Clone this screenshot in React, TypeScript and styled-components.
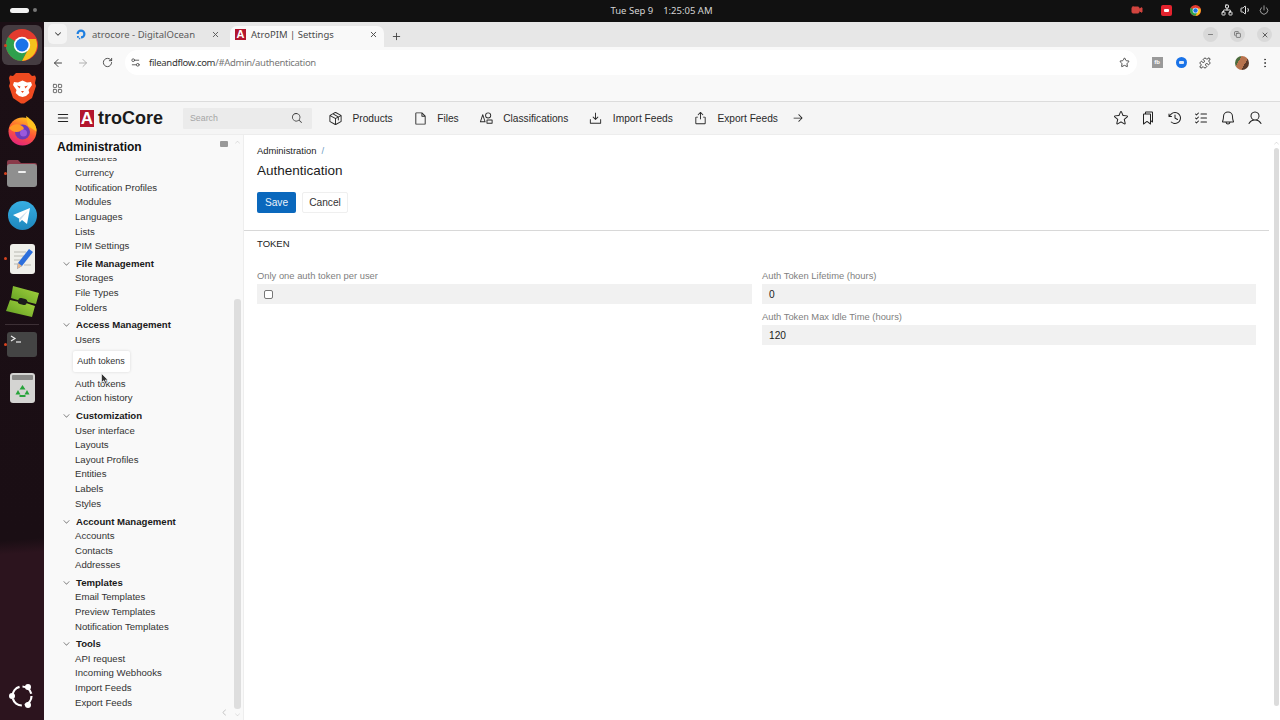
import React from "react";
import styled, { createGlobalStyle } from "styled-components";
import { ArrowLeft, ArrowRight, RotateCw, Star, Puzzle, X, Plus, Minus, ChevronDown, LayoutGrid, EllipsisVertical, Settings2, Copy, Volume1, Power, Network, Video } from "lucide-react";
import { PiPackage, PiFile, PiShapes, PiDownloadSimple, PiExport, PiArrowRight, PiStar, PiBookmarks, PiClockCounterClockwise, PiListChecks, PiBell, PiUser, PiMagnifyingGlass, PiList, PiCaretDown, PiCaretLeft, PiCaretUp } from "react-icons/pi";

const Global = createGlobalStyle`
  html, body { margin: 0; padding: 0; height: 100%; overflow: hidden; background: #fff; }
  #root { height: 100%; }
  * { box-sizing: border-box; }
`;

const Screen = styled.div`
  width: 1280px; height: 720px; display: flex; flex-direction: column; overflow: hidden;
  font-family: "Liberation Sans", Arial, sans-serif; color: #222;
`;
const TopBar = styled.header`
  height: 22px; flex: none; background: #111; color: #d8d8d8; display: flex; align-items: center;
  padding: 0 8px 2px 10px; position: relative;
`;
const Pill = styled.span`width: 19px; height: 5px; border-radius: 3px; background: #f2f2f2;`;
const Dot = styled.span`width: 4px; height: 4px; border-radius: 50%; background: #777; margin-left: 4px;`;
const Clock = styled.div`
  flex: 1; text-align: center; font: 9.5px "Noto Sans", sans-serif; white-space: pre; padding-left: 172px; color: #d4d4d4;
`;
const Tray = styled.div`display: flex; align-items: center; width: 158px; height: 16px;`;
const TraySlot = styled.span<{ $w: number }>`
  width: ${(p) => p.$w}px; display: flex; align-items: center; justify-content: center; flex: none; color: #e8e8e8;
`;
const RedChip = styled.span`
  width: 11px; height: 11px; border-radius: 2px; background: #e4232e; display: flex; align-items: center; justify-content: center; flex: none;
`;
const RedDot = styled.span`width: 5px; height: 3px; border-radius: 1px; background: #fff;`;

const Body = styled.div`flex: 1; display: flex; min-height: 0;`;
const Dock = styled.nav`
  width: 44px; flex: none; display: flex; flex-direction: column; align-items: center; padding-top: 3.3px;
  background: linear-gradient(176deg, #1b0f15 0, #1a0e14 74%, #2c141e 76%, #2c141e 100%);
`;
const DockSlot = styled.div<{ $active?: boolean }>`
  width: 40px; height: 40px; margin-bottom: 2.67px; flex: none; position: relative; display: flex; align-items: center; justify-content: center;
  border-radius: 6px; background: ${(p) => (p.$active ? "#453c41" : "transparent")};
`;
const RunDot = styled.span`
  position: absolute; left: 1.5px; top: 18.5px; width: 3px; height: 3px; border-radius: 50%; background: #d8431f;
`;
const DockSep = styled.div`width: 34px; height: 1px; background: #3d3036; flex: none;`;
const DockEnd = styled.div`margin-top: auto; margin-bottom: 4px; height: 40px; display: flex; align-items: center;`;

const Browser = styled.div`flex: 1; min-width: 0; display: flex; flex-direction: column;`;
const TabStrip = styled.div`
  height: 25px; flex: none; background: #e7e7e7; display: flex; align-items: flex-end; padding-left: 4px; color: #444;
`;
const TabMenu = styled.span`
  width: 19px; height: 20px; margin-bottom: 3px; border-radius: 5px; background: #f4f4f4; display: flex; align-items: center; justify-content: center; flex: none;
`;
const Tab = styled.div<{ $active?: boolean }>`
  height: 21px; width: ${(p) => (p.$active ? 154 : 157)}px; flex: none; display: flex; align-items: center;
  margin-left: ${(p) => (p.$active ? 0 : 6)}px; padding: ${(p) => (p.$active ? "0 6px 5px 5px" : "0 10px 5px 2px")}; border-radius: 7px 7px 0 0;
  background: ${(p) => (p.$active ? "#f9f9f9" : "transparent")}; color: ${(p) => (p.$active ? "#4a4a4a" : "#5a5a5a")};
  font: 9.5px "Noto Sans", sans-serif;
`;
const TabTitle = styled.span`flex: 1; margin-left: 5px; white-space: nowrap;`;
const TabFav = styled.span`
  width: 11px; height: 11px; background: #b3162e; color: #fff; font: bold 11px/11px "Liberation Sans", sans-serif; text-align: center; flex: none;
`;
const NewTab = styled.span`margin: 0 0 5px 7px; display: flex;`;
const WinControls = styled.div`margin-left: auto; display: flex; gap: 12px; padding: 0 8px 5px 0;`;
const WinBtn = styled.span`
  width: 15px; height: 15px; border-radius: 50%; background: #d9d9d9; display: flex; align-items: center; justify-content: center; color: #444;
`;
const Toolbar = styled.div`
  height: 29px; flex: none; background: #f9f9f9; display: flex; align-items: center; color: #555; padding: 2px 0 0 2px;
`;
const NavBtn = styled.span<{ $dim?: boolean }>`
  width: 24.5px; display: flex; justify-content: center; color: ${(p) => (p.$dim ? "#b0b0b0" : "#444")}; flex: none;
`;
const Omnibox = styled.div`
  width: 1012px; height: 25px; margin-left: 5.5px; background: #fff; border-radius: 13px; display: flex; align-items: center; padding: 0 7px 0 5px; flex: none;
`;
const Url = styled.div`
  flex: 1; margin-left: 8px; font: 9.5px "Noto Sans", sans-serif; color: #333; letter-spacing: -.3px; white-space: nowrap;
`;
const UrlRest = styled.span`color: #777;`;
const ExtSlot = styled.span<{ $ml: number }>`
  width: 20px; margin-left: ${(p) => p.$ml}px; display: flex; justify-content: center; flex: none; align-items: center;
`;
const ExtGrey = styled.span`
  width: 11px; height: 11px; background: #999; color: #fff; font: bold 6px/11px "Liberation Sans", sans-serif; text-align: center;
`;
const ExtBlue = styled.span`
  width: 11px; height: 11px; border-radius: 50%; background: #1a73e8; display: flex; align-items: center; justify-content: center;
`;
const ExtBlueInner = styled.span`width: 5px; height: 3px; border-radius: 1px; background: #dfe9f7;`;
const Avatar = styled.span`
  width: 14px; height: 14px; border-radius: 50%; background: linear-gradient(120deg, #4c6b3c 0 30%, #b8734e 30% 65%, #5d3a2a 65%);
`;
const BookmarkBar = styled.div`
  height: 26px; flex: none; background: #f9f9f9; border-bottom: 1px solid #dcdcdc; display: flex; align-items: center; padding: 0 0 1px 8px; color: #666;
`;

const AppHeader = styled.div`
  height: 33px; flex: none; background: #f5f5f5; border-bottom: 1px solid #ededed; display: flex; align-items: center; color: #222;
  padding-left: 12px; padding-right: 17px;
`;
const Burger = styled.span`display: flex; width: 14px; margin-right: 10px; flex: none;`;
const Logo = styled.div`
  display: flex; align-items: center; width: 83px; margin-right: 20px; flex: none;
  font: bold 18px "Liberation Sans", sans-serif; color: #1b1b1b; white-space: nowrap;
`;
const LogoMark = styled.span`
  width: 14px; height: 17px; background: #b3162e; color: #fff; font: bold 17px/18px "Liberation Sans", sans-serif; text-align: center; margin-right: 4px; flex: none;
`;
const Search = styled.div`
  width: 129px; height: 21px; background: #ebebeb; display: flex; align-items: center; justify-content: space-between; padding: 0 9px 0 7px;
  font-size: 8.8px; color: #a5a5a5; flex: none; margin-right: 16px; border-radius: 1px;
`;
const NavItem = styled.div`
  display: flex; align-items: center; gap: 9.5px; font-size: 10.2px; color: #2a2a2a; margin-right: 20px; white-space: nowrap; flex: none;
`;
const NavMore = styled.span`display: flex; margin-left: -6px;`;
const HeaderIcons = styled.div`margin-left: auto; display: flex; gap: 10.8px; align-items: center;`;

const Workspace = styled.div`flex: 1; min-height: 0; display: flex;`;
const Sidebar = styled.aside`
  width: 200px; flex: none; background: #f9f9f9; border-right: 1px solid #eeeeee; display: flex; flex-direction: column; position: relative; overflow: hidden;
`;
const SideHead = styled.div`
  height: 23px; flex: none; padding: 5px 0 0 13px; font-weight: bold; font-size: 12px; color: #111; line-height: 15px;
`;
const SideList = styled.div`flex: 1; min-height: 0; overflow: hidden; font-size: 9.6px; color: #333;`;
const SideScrolled = styled.div`margin-top: -9.5px;`;
const Item = styled.div`height: 14.67px; line-height: 14.67px; padding-left: 31px; white-space: nowrap;`;
const Group = styled.div`margin-top: 2.8px;`;
const GroupHead = styled.div`
  height: 14.67px; display: flex; align-items: center; padding: 0 0 1px 18px; gap: 5px; font-weight: bold; color: #1a1a1a;
`;
const SideTrack = styled.div`position: absolute; left: 190px; top: 164px; width: 7px; height: 410px; background: #dedede; border-radius: 3px;`;
const SideUp = styled.span`position: absolute; left: 190px; top: 4px; color: #ccc; display: flex;`;
const SideDown = styled.span`position: absolute; left: 190px; bottom: 2px; color: #ccc; display: flex;`;
const SideCollapse = styled.span`position: absolute; left: 176px; bottom: 3px; color: #bbb; display: flex;`;
const PinGlyph = styled.span`position: absolute; left: 176px; top: 6px; width: 8px; height: 6px; border-radius: 1px; background: #999;`;
const Tip = styled.div`
  position: absolute; left: 28.5px; top: 216px; width: 57px; height: 21px; background: #fff; border-radius: 2px; box-shadow: 0 0 3px rgba(0,0,0,.14);
  font-size: 9px; line-height: 21px; text-align: center; color: #333;
`;
const Cursor = styled.svg`position: absolute; left: 57px; top: 238px;`;

const Main = styled.main`flex: 1; min-width: 0; background: #fff; display: flex;`;
const MainCol = styled.div`flex: 1; min-width: 0; display: flex; flex-direction: column;`;
const TitleBlock = styled.div`
  height: 96px; flex: none; border-bottom: 1px solid #d8d8d8; padding: 9px 0 0 13px;
`;
const Crumbs = styled.div`font-size: 9.4px; line-height: 13px; color: #222;`;
const CrumbSep = styled.span`color: #6f9cc4; margin-left: 5px;`;
const PageTitle = styled.h1`margin: 4px 0 0; font-weight: normal; font-size: 13.5px; line-height: 20px; color: #1c1c1c;`;
const Actions = styled.div`display: flex; gap: 6px; margin-top: 11px;`;
const Btn = styled.button<{ $primary?: boolean }>`
  height: 21px; width: ${(p) => (p.$primary ? 39 : 46)}px; padding: 0; border-radius: 2px; font: 10.2px "Liberation Sans", sans-serif;
  background: ${(p) => (p.$primary ? "#0a68bd" : "#fff")}; color: ${(p) => (p.$primary ? "#e8f1fa" : "#333")};
  border: ${(p) => (p.$primary ? "none" : "1px solid #efefef")};
`;
const Panel = styled.section`padding: 5.5px 12px 0 13px;`;
const PanelHead = styled.div`font-size: 9.5px; line-height: 13px; color: #222;`;
const FormGrid = styled.div`display: grid; grid-template-columns: 495px 494px; column-gap: 10px; margin-top: 19.5px;`;
const Col = styled.div`display: flex; flex-direction: column; gap: 6px;`;
const Label = styled.div`font-size: 9.4px; line-height: 14px; height: 15px; color: #808080;`;
const Field = styled.div`
  height: 20px; background: #f1f1f1; display: flex; align-items: center; padding-left: 7px; font-size: 10.2px; color: #222;
`;
const Check = styled.span`width: 9px; height: 9px; border: 1px solid #777; border-radius: 2px; background: #fff;`;
const ScrollCol = styled.div`
  width: 11px; flex: none; display: flex; flex-direction: column; align-items: center; padding: 5px 0 14px 3px; color: #ccc;
`;
const ScrollThumb = styled.div`flex: 1; width: 5px; background: #dcdcdc; border-radius: 3px; margin-top: 1px;`;

const Chrome = ({ size = 32 }: { size?: number }) => (
  <svg width={size} height={size} viewBox="0 0 32 32">
    <circle cx="16" cy="16" r="16" fill="#e33b2e" />
    <path d="M16 16 L2.100 8 A16 16 0 0 0 16 32 L23 19z" fill="#2fa04c" />
    <path d="M16 10 H29.900 A16 16 0 0 1 16 32 L23 19z" fill="#f6c21c" />
    <circle cx="16" cy="16" r="8.200" fill="#fff" />
    <circle cx="16" cy="16" r="6.500" fill="#1a73e8" />
  </svg>
);

const Brave = () => (
  <svg width="27" height="32" viewBox="0 0 27 32">
    <path d="M7 1h13l3 3 3-.5L27 6l-1 5 1 3-4 12-8 5.500h-3L4 26 0 14l1-3-1-5 1-2.500L4 4z" fill="#ee4a20" />
    <path d="M5 10l4 .5 4.500-2 4.500 2 4-.5 1 3-3.500 5 .8 3-3.300 3-3.500 1-3.500-1-3.300-3 .8-3L4 13z" fill="#fff" />
    <path d="M8 13.500l3.500 1-1 2zM19 13.500l-3.500 1 1 2z" fill="#ee4a20" />
    <path d="M12 19h3l-1.500 2z" fill="#ee4a20" />
  </svg>
);

const Firefox = () => (
  <svg width="29" height="30" viewBox="0 0 29 30">
    <defs>
      <linearGradient id="ff" x1="0.700" y1="0" x2="0.300" y2="1">
        <stop offset="0" stopColor="#ffc21f" />
        <stop offset=".5" stopColor="#ff5a35" />
        <stop offset="1" stopColor="#e3227e" />
      </linearGradient>
    </defs>
    <circle cx="14.500" cy="15.500" r="14" fill="url(#ff)" />
    <path d="M18 0c6 4 11 9 10.500 15.500L20 10z" fill="#ffc21f" />
    <circle cx="14.500" cy="16" r="7.500" fill="#6d3bb8" />
    <path d="M1 12c3-4 9-5 13-2 3 2 2 4-1 5-5 2-9 1-12-3z" fill="#ff9a26" />
    <circle cx="15.500" cy="17" r="3.500" fill="#9a59dc" />
  </svg>
);

const Files = () => (
  <svg width="30" height="28" viewBox="0 0 30 28">
    <path d="M0 3a2 2 0 0 1 2-2h9l3 3h14a2 2 0 0 1 2 2v6H0z" fill="#8a3a4a" />
    <rect x="0" y="5" width="30" height="23" rx="3" fill="#8f8f8f" />
    <rect x="11" y="12" width="8" height="2" rx="1" fill="#f0f0f0" />
  </svg>
);

const Telegram = () => (
  <svg width="29" height="29" viewBox="0 0 29 29">
    <defs>
      <linearGradient id="tg" x1="0" y1="0" x2="0" y2="1">
        <stop offset="0" stopColor="#37aee2" />
        <stop offset="1" stopColor="#1e87bd" />
      </linearGradient>
    </defs>
    <circle cx="14.500" cy="14.500" r="14.500" fill="url(#tg)" />
    <path d="M5 14l17-7-3 16-5-4-2.500 2.500-.5-4-6-3.500z" fill="#fff" />
    <path d="M12 19.500l8-10-9 8z" fill="#c8dceb" />
  </svg>
);

const Editor = () => (
  <svg width="25" height="30" viewBox="0 0 25 30">
    <rect width="25" height="30" rx="3" fill="#efefea" />
    <path d="M4 8h12M4 12h10M4 16h8M4 20h6M14 21h7" stroke="#b9b9b2" strokeWidth="1" />
    <path d="M19 5l4 3-11 14-5 3 1-6z" fill="#2c6fdc" />
    <path d="M8 19l4 3-5 3z" fill="#e8b98b" />
  </svg>
);

const GreenCube = () => (
  <svg width="33" height="33" viewBox="0 0 33 33">
    <defs>
      <linearGradient id="gc" x1="0" y1="1" x2="1" y2="0">
        <stop offset="0" stopColor="#5f9c22" />
        <stop offset="1" stopColor="#a7d63f" />
      </linearGradient>
    </defs>
    <path d="M7 1l26 7-3 11-8-2-2-2h-3l-2 1-10-3z" fill="url(#gc)" />
    <path d="M4 15l9 2 2 2h3l2-1 9 3-3 11L0 26z" fill="url(#gc)" />
    <rect x="12" y="13.500" width="9" height="6" rx="2.500" fill="#1c1c1c" transform="rotate(14 16.500 16.500)" />
  </svg>
);

const Terminal = () => (
  <svg width="30" height="25" viewBox="0 0 30 25">
    <rect width="30" height="25" rx="3" fill="#444" />
    <path d="M4 4l4 2.500-4 2.500" stroke="#eee" strokeWidth="1.200" fill="none" />
    <path d="M9 10h5" stroke="#eee" strokeWidth="1.200" />
  </svg>
);

const Trash = () => (
  <svg width="25" height="30" viewBox="0 0 25 30">
    <rect width="25" height="30" rx="3" fill="#d4d4d2" />
    <rect x="2" y="2" width="21" height="5" rx="1" fill="#8a8a88" />
    <path d="M12.500 12l3 4.500h-6zM8 17l-2.500 4.500h5zM17 17l2.500 4.500h-5z" fill="#27a33a" />
    <path d="M9.500 22h6v2h-6z" fill="#27a33a" />
  </svg>
);

const Ubuntu = () => (
  <svg width="26" height="26" viewBox="0 0 26 26">
    <circle cx="13" cy="13" r="9.500" fill="none" stroke="#fff" strokeWidth="2.200" strokeDasharray="12 3" />
    <circle cx="19" cy="4" r="3" fill="#fff" />
    <circle cx="3" cy="13" r="3" fill="#fff" />
    <circle cx="19" cy="22" r="3" fill="#fff" />
  </svg>
);

const DoFav = () => (
  <svg width="12" height="12" viewBox="0 0 12 12">
    <path d="M6 10.500V8.300a2.300 2.300 0 1 0-2.300-2.300H1.500A4.500 4.500 0 1 1 6 10.500z" fill="#1f7fe0" />
    <path d="M2 8h1.800v1.800H2zM3.800 9.800h1.500v1.400H3.800z" fill="#1f7fe0" />
  </svg>
);

const groups: { title: string | null; items: string[] }[] = [
  { title: null, items: ["Measures", "Currency", "Notification Profiles", "Modules", "Languages", "Lists", "PIM Settings"] },
  { title: "File Management", items: ["Storages", "File Types", "Folders"] },
  { title: "Access Management", items: ["Users", "Teams", "Roles", "Auth tokens", "Action history"] },
  { title: "Customization", items: ["User interface", "Layouts", "Layout Profiles", "Entities", "Labels", "Styles"] },
  { title: "Account Management", items: ["Accounts", "Contacts", "Addresses"] },
  { title: "Templates", items: ["Email Templates", "Preview Templates", "Notification Templates"] },
  { title: "Tools", items: ["API request", "Incoming Webhooks", "Import Feeds", "Export Feeds"] },
];

const navItems = [
  { label: "Products", Icon: PiPackage },
  { label: "Files", Icon: PiFile },
  { label: "Classifications", Icon: PiShapes },
  { label: "Import Feeds", Icon: PiDownloadSimple },
  { label: "Export Feeds", Icon: PiExport },
];

export default function App() {
  return (
    <Screen>
      <Global />
      <TopBar>
        <Pill />
        <Dot />
        <Clock>{"Tue Sep 9    1:25:05 AM"}</Clock>
        <Tray>
          <TraySlot $w={46}><Video size={12} color="#d2453f" fill="#d2453f" /></TraySlot>
          <TraySlot $w={12}><RedChip><RedDot /></RedChip></TraySlot>
          <TraySlot $w={46}><Chrome size={11} /></TraySlot>
          <TraySlot $w={18}><Network size={12} /></TraySlot>
          <TraySlot $w={20}><Volume1 size={12} /></TraySlot>
          <TraySlot $w={16}><Power size={10} color="#bbb" /></TraySlot>
        </Tray>
      </TopBar>
      <Body>
        <Dock>
          <DockSlot $active><RunDot /><Chrome /></DockSlot>
          <DockSlot><Brave /></DockSlot>
          <DockSlot><Firefox /></DockSlot>
          <DockSlot><RunDot /><Files /></DockSlot>
          <DockSlot><Telegram /></DockSlot>
          <DockSlot><RunDot /><Editor /></DockSlot>
          <DockSlot><GreenCube /></DockSlot>
          <DockSep />
          <DockSlot><RunDot /><Terminal /></DockSlot>
          <DockSlot><Trash /></DockSlot>
          <DockEnd><Ubuntu /></DockEnd>
        </Dock>
        <Browser>
          <TabStrip>
            <TabMenu><ChevronDown size={10} strokeWidth={2.5} /></TabMenu>
            <Tab>
              <DoFav />
              <TabTitle>atrocore - DigitalOcean</TabTitle>
              <X size={9} strokeWidth={2.5} />
            </Tab>
            <Tab $active>
              <TabFav>A</TabFav>
              <TabTitle>AtroPIM | Settings</TabTitle>
              <X size={9} strokeWidth={2.5} />
            </Tab>
            <NewTab><Plus size={11} strokeWidth={2} /></NewTab>
            <WinControls>
              <WinBtn><Minus size={7} /></WinBtn>
              <WinBtn><Copy size={7} /></WinBtn>
              <WinBtn><X size={8} strokeWidth={2.5} /></WinBtn>
            </WinControls>
          </TabStrip>
          <Toolbar>
            <NavBtn><ArrowLeft size={12} /></NavBtn>
            <NavBtn $dim><ArrowRight size={12} /></NavBtn>
            <NavBtn><RotateCw size={11} /></NavBtn>
            <Omnibox>
              <Settings2 size={11} />
              <Url>fileandflow.com<UrlRest>/#Admin/authentication</UrlRest></Url>
              <Star size={11} color="#444" />
            </Omnibox>
            <ExtSlot $ml={10}><ExtGrey>fb</ExtGrey></ExtSlot>
            <ExtSlot $ml={4}><ExtBlue><ExtBlueInner /></ExtBlue></ExtSlot>
            <ExtSlot $ml={4}><Puzzle size={12} color="#444" /></ExtSlot>
            <ExtSlot $ml={17}><Avatar /></ExtSlot>
            <ExtSlot $ml={3}><EllipsisVertical size={12} color="#444" /></ExtSlot>
          </Toolbar>
          <BookmarkBar><LayoutGrid size={11} /></BookmarkBar>
          <AppHeader>
            <Burger><PiList size={14} /></Burger>
            <Logo><LogoMark>A</LogoMark>troCore</Logo>
            <Search>Search<PiMagnifyingGlass size={12} color="#333" /></Search>
            {navItems.map(({ label, Icon }) => (
              <NavItem key={label}><Icon size={15} />{label}</NavItem>
            ))}
            <NavMore><PiArrowRight size={12} /></NavMore>
            <HeaderIcons>
              <PiStar size={16} />
              <PiBookmarks size={16} />
              <PiClockCounterClockwise size={16} />
              <PiListChecks size={16} />
              <PiBell size={16} />
              <PiUser size={16} />
            </HeaderIcons>
          </AppHeader>
          <Workspace>
            <Sidebar>
              <SideHead>Administration</SideHead>
              <SideList>
                <SideScrolled>
                  {groups.map((g, i) => (
                    <Group key={i}>
                      {g.title && (
                        <GroupHead><PiCaretDown size={9} color="#666" />{g.title}</GroupHead>
                      )}
                      {g.items.map((it) => <Item key={it}>{it}</Item>)}
                    </Group>
                  ))}
                </SideScrolled>
              </SideList>
              <PinGlyph />
              <SideUp><PiCaretUp size={7} /></SideUp>
              <SideTrack />
              <SideDown><PiCaretDown size={7} /></SideDown>
              <SideCollapse><PiCaretLeft size={9} /></SideCollapse>
              <Tip>Auth tokens</Tip>
              <Cursor width="8" height="12" viewBox="0 0 8 12">
                <path d="M.5.500v9l2.300-2 1.500 3.500 1.500-.6-1.500-3.400H7z" fill="#333" stroke="#fff" strokeWidth=".6" />
              </Cursor>
            </Sidebar>
            <Main>
              <MainCol>
                <TitleBlock>
                  <Crumbs>Administration<CrumbSep>/</CrumbSep></Crumbs>
                  <PageTitle>Authentication</PageTitle>
                  <Actions>
                    <Btn $primary>Save</Btn>
                    <Btn>Cancel</Btn>
                  </Actions>
                </TitleBlock>
                <Panel>
                  <PanelHead>TOKEN</PanelHead>
                  <FormGrid>
                    <Col>
                      <div>
                        <Label>Only one auth token per user</Label>
                        <Field><Check /></Field>
                      </div>
                    </Col>
                    <Col>
                      <div>
                        <Label>Auth Token Lifetime (hours)</Label>
                        <Field>0</Field>
                      </div>
                      <div>
                        <Label>Auth Token Max Idle Time (hours)</Label>
                        <Field>120</Field>
                      </div>
                    </Col>
                  </FormGrid>
                </Panel>
              </MainCol>
              <ScrollCol>
                <PiCaretUp size={7} />
                <ScrollThumb />
              </ScrollCol>
            </Main>
          </Workspace>
        </Browser>
      </Body>
    </Screen>
  );
}
